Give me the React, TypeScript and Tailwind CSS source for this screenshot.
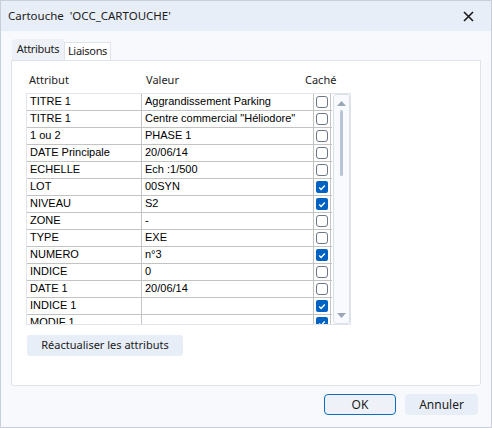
import React from "react";

type Row = { a: string; v: string; c: boolean };

const rows: Row[] = [
  { a: "TITRE 1", v: "Aggrandissement Parking", c: false },
  { a: "TITRE 1", v: 'Centre commercial "Héliodore"', c: false },
  { a: "1 ou 2", v: "PHASE 1", c: false },
  { a: "DATE Principale", v: "20/06/14", c: false },
  { a: "ECHELLE", v: "Ech :1/500", c: false },
  { a: "LOT", v: "00SYN", c: true },
  { a: "NIVEAU", v: "S2", c: true },
  { a: "ZONE", v: "-", c: false },
  { a: "TYPE", v: "EXE", c: false },
  { a: "NUMERO", v: "n°3", c: true },
  { a: "INDICE", v: "0", c: false },
  { a: "DATE 1", v: "20/06/14", c: false },
  { a: "INDICE 1", v: "", c: true },
  { a: "MODIF 1", v: "", c: true },
];

function Check({ on }: { on: boolean }) {
  if (on) {
    return (
      <div className="w-[12px] h-[12px] rounded-[2px] bg-[#0063c4] flex items-center justify-center">
        <svg width="8" height="7" viewBox="0 0 8 7">
          <path d="M1.2 3.6 L3.1 5.4 L6.8 1.4" stroke="white" strokeWidth="1.4" fill="none" />
        </svg>
      </div>
    );
  }
  return <div className="w-[12px] h-[12px] rounded-[3px] border border-[#6b7786] bg-white" />;
}

export default function App() {
  const ui = { fontFamily: '"Noto Sans", "Open Sans", sans-serif' };
  const arial = { fontFamily: '"Liberation Sans", Arial, sans-serif' };
  return (
    <div
      className="w-[492px] h-[428px] border border-[#c6d0dc] bg-[#f7f9fc] flex flex-col text-[#1b1b1b] overflow-hidden"
      style={ui}
    >
      {/* title bar */}
      <div className="h-[30px] bg-[#e8eef7] flex items-center justify-between pl-[7px] pr-[17px] shrink-0">
        <span className="text-[11.5px] leading-none">Cartouche&nbsp; 'OCC_CARTOUCHE'</span>
        <svg width="11" height="11" viewBox="0 0 11 11">
          <path d="M1 1 L10 10 M10 1 L1 10" stroke="#1b1b1b" strokeWidth="1.6" />
        </svg>
      </div>

      {/* body */}
      <div className="flex-1 flex flex-col px-[10px] pt-[9px]">
        {/* tabs */}
        <div className="flex items-end h-[20px] pl-[1px]">
          <div className="h-[21px] w-[52px] bg-[#eef2f8] rounded-tl-[4px] flex items-center justify-center text-[11px] tracking-[-0.3px] relative z-10">
            Attributs
          </div>
          <div className="h-[18px] w-[47px] bg-white border border-b-0 border-[#dde3ea] flex items-center justify-center text-[11px] tracking-[-0.3px]">
            Liaisons
          </div>
        </div>

        {/* panel */}
        <div className="h-[326px] bg-white border border-[#dde3ea] rounded-b-[3px] flex flex-col px-[14px]">
          {/* header */}
          <div className="flex h-[32px] items-center text-[11px] pt-[6px]">
            <div className="w-[116px] pl-[3px]">Attribut</div>
            <div className="w-[163px] pl-[4px]">Valeur</div>
            <div>Caché</div>
          </div>

          {/* grid */}
          <div className="flex w-[325px] h-[232px] border border-[#e1e5eb] overflow-hidden" style={arial}>
            <div className="flex flex-col w-[305px]">
              {rows.map((r, i) => (
                <div key={i} className="flex h-[17px] shrink-0 border-b border-[#c3c3c3] text-[11px] text-black">
                  <div className="w-[115px] border-r border-[#c3c3c3] pl-[3px] leading-[15px] whitespace-nowrap">
                    {r.a}
                  </div>
                  <div className="w-[172px] border-r border-[#c3c3c3] pl-[3px] leading-[15px] whitespace-nowrap overflow-hidden">
                    {r.v}
                  </div>
                  <div className="w-[17px] border-r border-[#c3c3c3] flex items-center justify-center">
                    <Check on={r.c} />
                  </div>
                </div>
              ))}
            </div>
            {/* scrollbar */}
            <div className="flex-1 flex justify-center pl-[1px]">
              <div className="w-[17px] h-full bg-[#f8fafd] border border-[#d9e0e9] rounded-[3px] flex flex-col items-center pt-[6px] pb-[5px]">
                <svg width="9" height="5" viewBox="0 0 9 5">
                  <path d="M0 5 L4.5 0 L9 5 Z" fill="#9aa6b6" />
                </svg>
                <div className="w-[3px] h-[66px] mt-[4px] rounded-full bg-[#b9c5d5]" />
                <div className="flex-1" />
                <svg width="9" height="5" viewBox="0 0 9 5">
                  <path d="M0 0 L4.5 5 L9 0 Z" fill="#9aa6b6" />
                </svg>
              </div>
            </div>
          </div>

          {/* refresh button */}
          <div className="mt-[10px] pl-[1px]">
            <button className="w-[156px] h-[21px] bg-[#e8eef7] rounded-[3px] text-[11px] flex items-center justify-center">
              Réactualiser les attributs
            </button>
          </div>
        </div>

        {/* footer */}
        <div className="flex justify-end gap-[9px] mt-[8px] pr-[3px]">
          <button className="w-[72px] h-[21px] border-[1.5px] border-[#0f6cbd] bg-[#eef2f8] rounded-[4px] text-[12px] flex items-center justify-center">
            OK
          </button>
          <button className="w-[73px] h-[21px] bg-[#e8eef7] rounded-[4px] text-[12px] flex items-center justify-center">
            Annuler
          </button>
        </div>
      </div>
    </div>
  );
}
